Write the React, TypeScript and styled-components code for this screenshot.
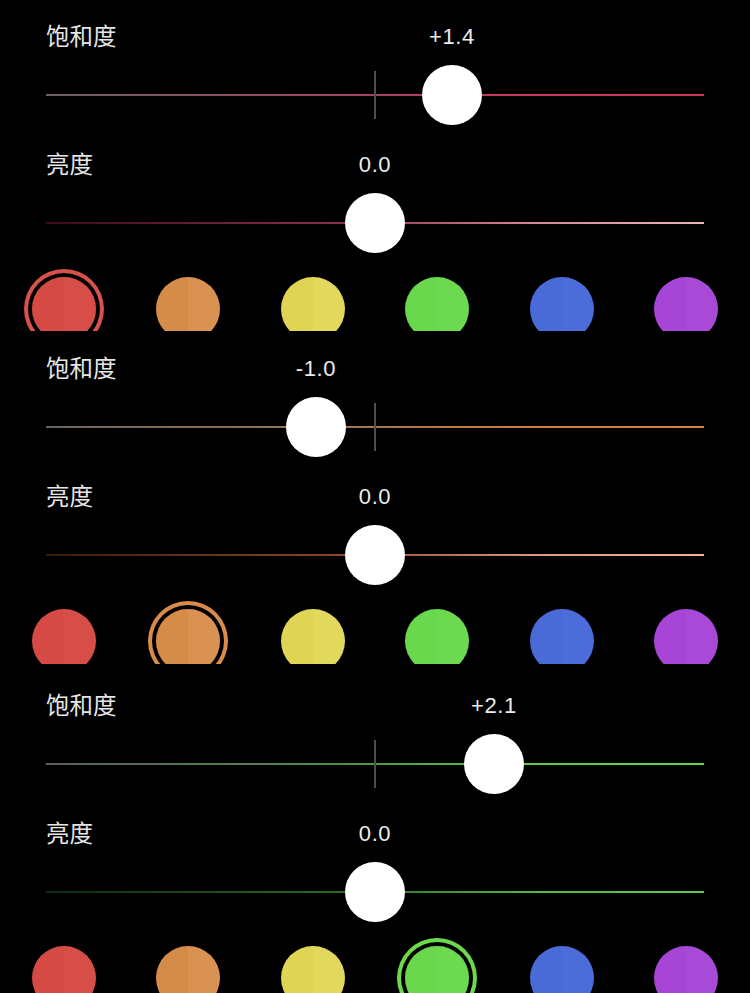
import React from 'react';
import styled, { createGlobalStyle } from 'styled-components';

type Swatch = { name: string; left: string; right: string };

type SliderSpec = {
  label: string;
  value: string;
  offset: number;
  track: string;
  tick?: boolean;
};

type PanelSpec = {
  top: number;
  height: number;
  selected: number;
  ring: string;
  saturation: SliderSpec;
  brightness: SliderSpec;
};

const TRACK_WIDTH = 658;

const SWATCHES: Swatch[] = [
  { name: 'red', left: '#d54a45', right: '#d74d48' },
  { name: 'orange', left: '#d58c48', right: '#d99252' },
  { name: 'yellow', left: '#e0d455', right: '#e2d85c' },
  { name: 'green', left: '#69d84c', right: '#6cda50' },
  { name: 'blue', left: '#4a6bd7', right: '#4c6dd9' },
  { name: 'purple', left: '#a746d6', right: '#a949d8' },
];

const PANELS: PanelSpec[] = [
  {
    top: 23,
    height: 331,
    selected: 0,
    ring: '#d9514b',
    saturation: {
      label: '饱和度',
      value: '+1.4',
      offset: 77,
      tick: true,
      track: 'linear-gradient(to right, #6a6065 0%, #a04460 45%, #c7385c 70%, #d0335a 100%)',
    },
    brightness: {
      label: '亮度',
      value: '0.0',
      offset: 0,
      track: 'linear-gradient(to right, #3c0c18 0%, #8a3048 45%, #d48a98 75%, #eab4bb 100%)',
    },
  },
  {
    top: 24,
    height: 333,
    selected: 1,
    ring: '#d98c4a',
    saturation: {
      label: '饱和度',
      value: '-1.0',
      offset: -59,
      tick: true,
      track: 'linear-gradient(to right, #6a6460 0%, #9e7452 45%, #cf8040 75%, #d8843c 100%)',
    },
    brightness: {
      label: '亮度',
      value: '0.0',
      offset: 0,
      track: 'linear-gradient(to right, #3a1a0c 0%, #8a4a2c 45%, #dc9a7a 75%, #f0b696 100%)',
    },
  },
  {
    top: 28,
    height: 329,
    selected: 3,
    ring: '#6cd94d',
    saturation: {
      label: '饱和度',
      value: '+2.1',
      offset: 119,
      tick: true,
      track: 'linear-gradient(to right, #5a605a 0%, #4e8e46 45%, #5cc448 70%, #64d44c 100%)',
    },
    brightness: {
      label: '亮度',
      value: '0.0',
      offset: 0,
      track: 'linear-gradient(to right, #0c2a0c 0%, #2a6a24 45%, #56b846 75%, #62c850 100%)',
    },
  },
];

const toPercent = (offset: number) => 50 + (offset / TRACK_WIDTH) * 100;

const Slider = ({ spec }: { spec: SliderSpec }) => {
  const pct = toPercent(spec.offset);
  return (
    <SliderBlock>
      <HeaderRow>
        <Label>{spec.label}</Label>
        <Value style={{ left: `${pct}%` }}>{spec.value}</Value>
      </HeaderRow>
      <TrackArea>
        <Track $fill={spec.track} />
        {spec.tick && <Tick />}
        <Thumb style={{ left: `${pct}%` }} />
      </TrackArea>
    </SliderBlock>
  );
};

const Panel = ({ spec }: { spec: PanelSpec }) => (
  <PanelBox $top={spec.top} $height={spec.height}>
    <Controls>
      <Slider spec={spec.saturation} />
      <Slider spec={spec.brightness} />
    </Controls>
    <SwatchRow>
      {SWATCHES.map((s, i) => (
        <SwatchSlot key={s.name}>
          <Dot $left={s.left} $right={s.right} $ring={i === spec.selected ? spec.ring : undefined} />
        </SwatchSlot>
      ))}
    </SwatchRow>
  </PanelBox>
);

const App = () => (
  <>
    <GlobalStyle />
    <Screen>
      {PANELS.map((p, i) => (
        <Panel key={i} spec={p} />
      ))}
    </Screen>
  </>
);

const GlobalStyle = createGlobalStyle`
  html, body {
    margin: 0;
    padding: 0;
    background: #000;
  }
  body {
    font-family: "Noto Sans CJK SC", "Noto Sans", sans-serif;
    color: #e8e8e8;
  }
`;

const Screen = styled.div`
  width: 750px;
  height: 993px;
  overflow: hidden;
  background: #000;
  display: flex;
  flex-direction: column;
`;

const PanelBox = styled.section<{ $top: number; $height: number }>`
  flex: none;
  box-sizing: border-box;
  height: ${(p) => p.$height}px;
  padding-top: ${(p) => p.$top}px;
  overflow: hidden;
  display: flex;
  flex-direction: column;
  gap: 16px;
`;

const Controls = styled.div`
  display: flex;
  flex-direction: column;
  gap: 26px;
  padding: 0 46px;
`;

const SliderBlock = styled.div`
  display: flex;
  flex-direction: column;
  gap: 14px;
`;

const HeaderRow = styled.div`
  position: relative;
  height: 28px;
  display: flex;
  align-items: center;
`;

const Label = styled.span`
  font-family: "Noto Sans CJK SC", sans-serif;
  font-size: 23.5px;
  line-height: 28px;
  color: #e6e6e6;
  margin-top: -5px;
`;

const Value = styled.span`
  position: absolute;
  top: 0;
  transform: translateX(-50%);
  font-family: "Liberation Sans", Arial, sans-serif;
  font-size: 22px;
  line-height: 28px;
  letter-spacing: 0.6px;
  color: #ececec;
  white-space: nowrap;
`;

const TrackArea = styled.div`
  position: relative;
  height: 60px;
  display: flex;
  align-items: center;
`;

const Track = styled.div<{ $fill: string }>`
  width: 100%;
  height: 2px;
  background: ${(p) => p.$fill};
`;

const Tick = styled.div`
  position: absolute;
  left: 50%;
  top: 6px;
  width: 2px;
  height: 48px;
  margin-left: -1px;
  background: #4e4e4e;
`;

const Thumb = styled.div`
  position: absolute;
  top: 0;
  width: 60px;
  height: 60px;
  border-radius: 50%;
  background: #fff;
  transform: translateX(-50%);
`;

const SwatchRow = styled.div`
  display: flex;
  justify-content: space-between;
  padding: 0 24px;
`;

const SwatchSlot = styled.div`
  width: 80px;
  height: 80px;
  display: flex;
  align-items: center;
  justify-content: center;
`;

const Dot = styled.div<{ $left: string; $right: string; $ring?: string }>`
  width: 64px;
  height: 64px;
  border-radius: 50%;
  background: linear-gradient(to right, ${(p) => p.$left} 50%, ${(p) => p.$right} 50%);
  box-shadow: ${(p) => (p.$ring ? `0 0 0 4px #000, 0 0 0 8px ${p.$ring}` : 'none')};
`;

export default App;
